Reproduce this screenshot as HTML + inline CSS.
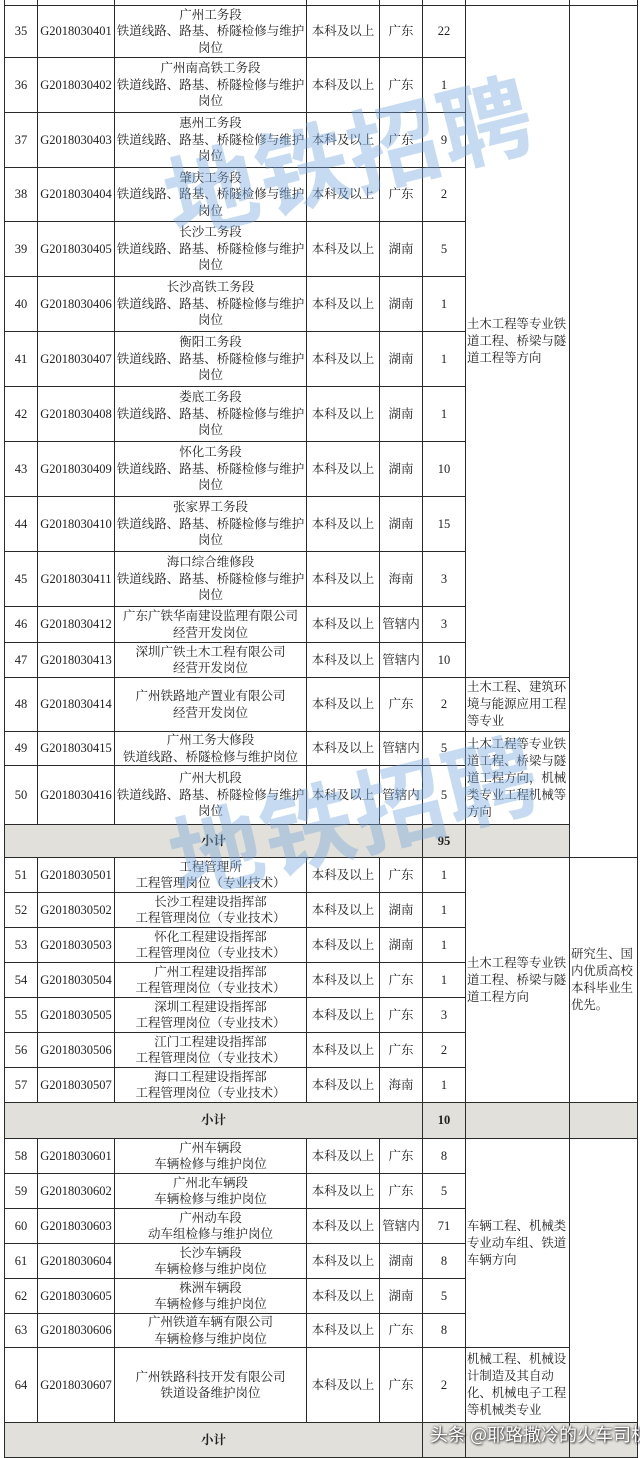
<!DOCTYPE html>
<html><head><meta charset="utf-8">
<style>
html,body{margin:0;padding:0;background:#fff;width:640px;height:1458px;overflow:hidden;position:relative}
table{position:absolute;left:4px;top:-1px;border-collapse:collapse;table-layout:fixed;width:633px;font-family:"Liberation Serif","Noto Serif CJK SC",serif;font-size:12.5px;color:#222;line-height:16.5px}
td{border:1.5px solid #2a2a2a;padding:0;text-align:center;vertical-align:middle;overflow:hidden}
td.m{text-align:left;padding-left:1px;padding-right:0;line-height:17px;font-size:12.4px;letter-spacing:0}
tr.s td{background:#e2e0da;font-weight:bold}
.wm{position:absolute;font-family:"Noto Sans CJK SC",sans-serif;font-weight:bold;color:rgba(120,170,222,0.42);font-size:92px;transform:rotate(-14deg);white-space:nowrap;letter-spacing:2px}
.sig{position:absolute;left:430px;top:1421px;font-family:"Noto Sans CJK SC",sans-serif;font-size:18px;color:#fff;text-shadow:0 0 2px #333,1px 1px 2px #333;white-space:nowrap}
</style></head><body>
<table>
<colgroup><col style="width:33px"><col style="width:77px"><col style="width:192px"><col style="width:73px"><col style="width:43px"><col style="width:43px"><col style="width:104px"><col style="width:68px"></colgroup>
<tr style="height:6px"><td></td><td></td><td></td><td></td><td></td><td></td><td></td><td></td></tr>
<tr style="height:52px"><td>35</td><td>G2018030401</td><td>广州工务段<br>铁道线路、路基、桥隧检修与维护<br>岗位</td><td>本科及以上</td><td>广东</td><td>22</td><td class="m" rowspan="13">土木工程等专业铁道工程、桥梁与隧道工程等方向</td><td rowspan="17"></td></tr>
<tr style="height:55px"><td>36</td><td>G2018030402</td><td>广州南高铁工务段<br>铁道线路、路基、桥隧检修与维护<br>岗位</td><td>本科及以上</td><td>广东</td><td>1</td></tr>
<tr style="height:55px"><td>37</td><td>G2018030403</td><td>惠州工务段<br>铁道线路、路基、桥隧检修与维护<br>岗位</td><td>本科及以上</td><td>广东</td><td>9</td></tr>
<tr style="height:54px"><td>38</td><td>G2018030404</td><td>肇庆工务段<br>铁道线路、路基、桥隧检修与维护<br>岗位</td><td>本科及以上</td><td>广东</td><td>2</td></tr>
<tr style="height:55px"><td>39</td><td>G2018030405</td><td>长沙工务段<br>铁道线路、路基、桥隧检修与维护<br>岗位</td><td>本科及以上</td><td>湖南</td><td>5</td></tr>
<tr style="height:55px"><td>40</td><td>G2018030406</td><td>长沙高铁工务段<br>铁道线路、路基、桥隧检修与维护<br>岗位</td><td>本科及以上</td><td>湖南</td><td>1</td></tr>
<tr style="height:55px"><td>41</td><td>G2018030407</td><td>衡阳工务段<br>铁道线路、路基、桥隧检修与维护<br>岗位</td><td>本科及以上</td><td>湖南</td><td>1</td></tr>
<tr style="height:55px"><td>42</td><td>G2018030408</td><td>娄底工务段<br>铁道线路、路基、桥隧检修与维护<br>岗位</td><td>本科及以上</td><td>湖南</td><td>1</td></tr>
<tr style="height:55px"><td>43</td><td>G2018030409</td><td>怀化工务段<br>铁道线路、路基、桥隧检修与维护<br>岗位</td><td>本科及以上</td><td>湖南</td><td>10</td></tr>
<tr style="height:55px"><td>44</td><td>G2018030410</td><td>张家界工务段<br>铁道线路、路基、桥隧检修与维护<br>岗位</td><td>本科及以上</td><td>湖南</td><td>15</td></tr>
<tr style="height:55px"><td>45</td><td>G2018030411</td><td>海口综合维修段<br>铁道线路、路基、桥隧检修与维护<br>岗位</td><td>本科及以上</td><td>海南</td><td>3</td></tr>
<tr style="height:36px"><td>46</td><td>G2018030412</td><td>广东广铁华南建设监理有限公司<br>经营开发岗位</td><td>本科及以上</td><td>管辖内</td><td>3</td></tr>
<tr style="height:35px"><td>47</td><td>G2018030413</td><td>深圳广铁土木工程有限公司<br>经营开发岗位</td><td>本科及以上</td><td>管辖内</td><td>10</td></tr>
<tr style="height:54px"><td>48</td><td>G2018030414</td><td>广州铁路地产置业有限公司<br>经营开发岗位</td><td>本科及以上</td><td>广东</td><td>2</td><td class="m">土木工程、建筑环境与能源应用工程等专业</td></tr>
<tr style="height:34px"><td>49</td><td>G2018030415</td><td>广州工务大修段<br>铁道线路、桥隧检修与维护岗位</td><td>本科及以上</td><td>管辖内</td><td>5</td><td class="m" rowspan="2">土木工程等专业铁道工程、桥梁与隧道工程方向，机械类专业工程机械等方向</td></tr>
<tr style="height:59px"><td>50</td><td>G2018030416</td><td>广州大机段<br>铁道线路、路基、桥隧检修与维护<br>岗位</td><td>本科及以上</td><td>管辖内</td><td>5</td></tr>
<tr class="s" style="height:33px"><td colspan="5">小计</td><td>95</td><td></td><td></td></tr>
<tr style="height:35px"><td>51</td><td>G2018030501</td><td>工程管理所<br>工程管理岗位（专业技术）</td><td>本科及以上</td><td>广东</td><td>1</td><td class="m" rowspan="7">土木工程等专业铁道工程、桥梁与隧道工程方向</td><td class="m" rowspan="7">研究生、国内优质高校本科毕业生优先。</td></tr>
<tr style="height:35px"><td>52</td><td>G2018030502</td><td>长沙工程建设指挥部<br>工程管理岗位（专业技术）</td><td>本科及以上</td><td>湖南</td><td>1</td></tr>
<tr style="height:35px"><td>53</td><td>G2018030503</td><td>怀化工程建设指挥部<br>工程管理岗位（专业技术）</td><td>本科及以上</td><td>湖南</td><td>1</td></tr>
<tr style="height:35px"><td>54</td><td>G2018030504</td><td>广州工程建设指挥部<br>工程管理岗位（专业技术）</td><td>本科及以上</td><td>广东</td><td>1</td></tr>
<tr style="height:35px"><td>55</td><td>G2018030505</td><td>深圳工程建设指挥部<br>工程管理岗位（专业技术）</td><td>本科及以上</td><td>广东</td><td>3</td></tr>
<tr style="height:35px"><td>56</td><td>G2018030506</td><td>江门工程建设指挥部<br>工程管理岗位（专业技术）</td><td>本科及以上</td><td>广东</td><td>2</td></tr>
<tr style="height:35px"><td>57</td><td>G2018030507</td><td>海口工程建设指挥部<br>工程管理岗位（专业技术）</td><td>本科及以上</td><td>海南</td><td>1</td></tr>
<tr class="s" style="height:36px"><td colspan="5">小计</td><td>10</td><td></td><td></td></tr>
<tr style="height:35px"><td>58</td><td>G2018030601</td><td>广州车辆段<br>车辆检修与维护岗位</td><td>本科及以上</td><td>广东</td><td>8</td><td class="m" rowspan="6">车辆工程、机械类专业动车组、铁道车辆方向</td><td rowspan="7"></td></tr>
<tr style="height:35px"><td>59</td><td>G2018030602</td><td>广州北车辆段<br>车辆检修与维护岗位</td><td>本科及以上</td><td>广东</td><td>5</td></tr>
<tr style="height:35px"><td>60</td><td>G2018030603</td><td>广州动车段<br>动车组检修与维护岗位</td><td>本科及以上</td><td>管辖内</td><td>71</td></tr>
<tr style="height:35px"><td>61</td><td>G2018030604</td><td>长沙车辆段<br>车辆检修与维护岗位</td><td>本科及以上</td><td>湖南</td><td>8</td></tr>
<tr style="height:35px"><td>62</td><td>G2018030605</td><td>株洲车辆段<br>车辆检修与维护岗位</td><td>本科及以上</td><td>湖南</td><td>5</td></tr>
<tr style="height:34px"><td>63</td><td>G2018030606</td><td>广州铁道车辆有限公司<br>车辆检修与维护岗位</td><td>本科及以上</td><td>广东</td><td>8</td></tr>
<tr style="height:75px"><td>64</td><td>G2018030607</td><td>广州铁路科技开发有限公司<br>铁道设备维护岗位</td><td>本科及以上</td><td>广东</td><td>2</td><td class="m">机械工程、机械设计制造及其自动化、机械电子工程等机械类专业</td></tr>
<tr class="s" style="height:35px"><td colspan="5">小计</td><td></td><td></td><td></td></tr>
</table>
<div class="wm" style="left:160px;top:85px">地铁招聘</div>
<div class="wm" style="left:165px;top:745px">地铁招聘</div>
<div class="sig">头条 @耶路撒冷的火车司机</div>
</body></html>
